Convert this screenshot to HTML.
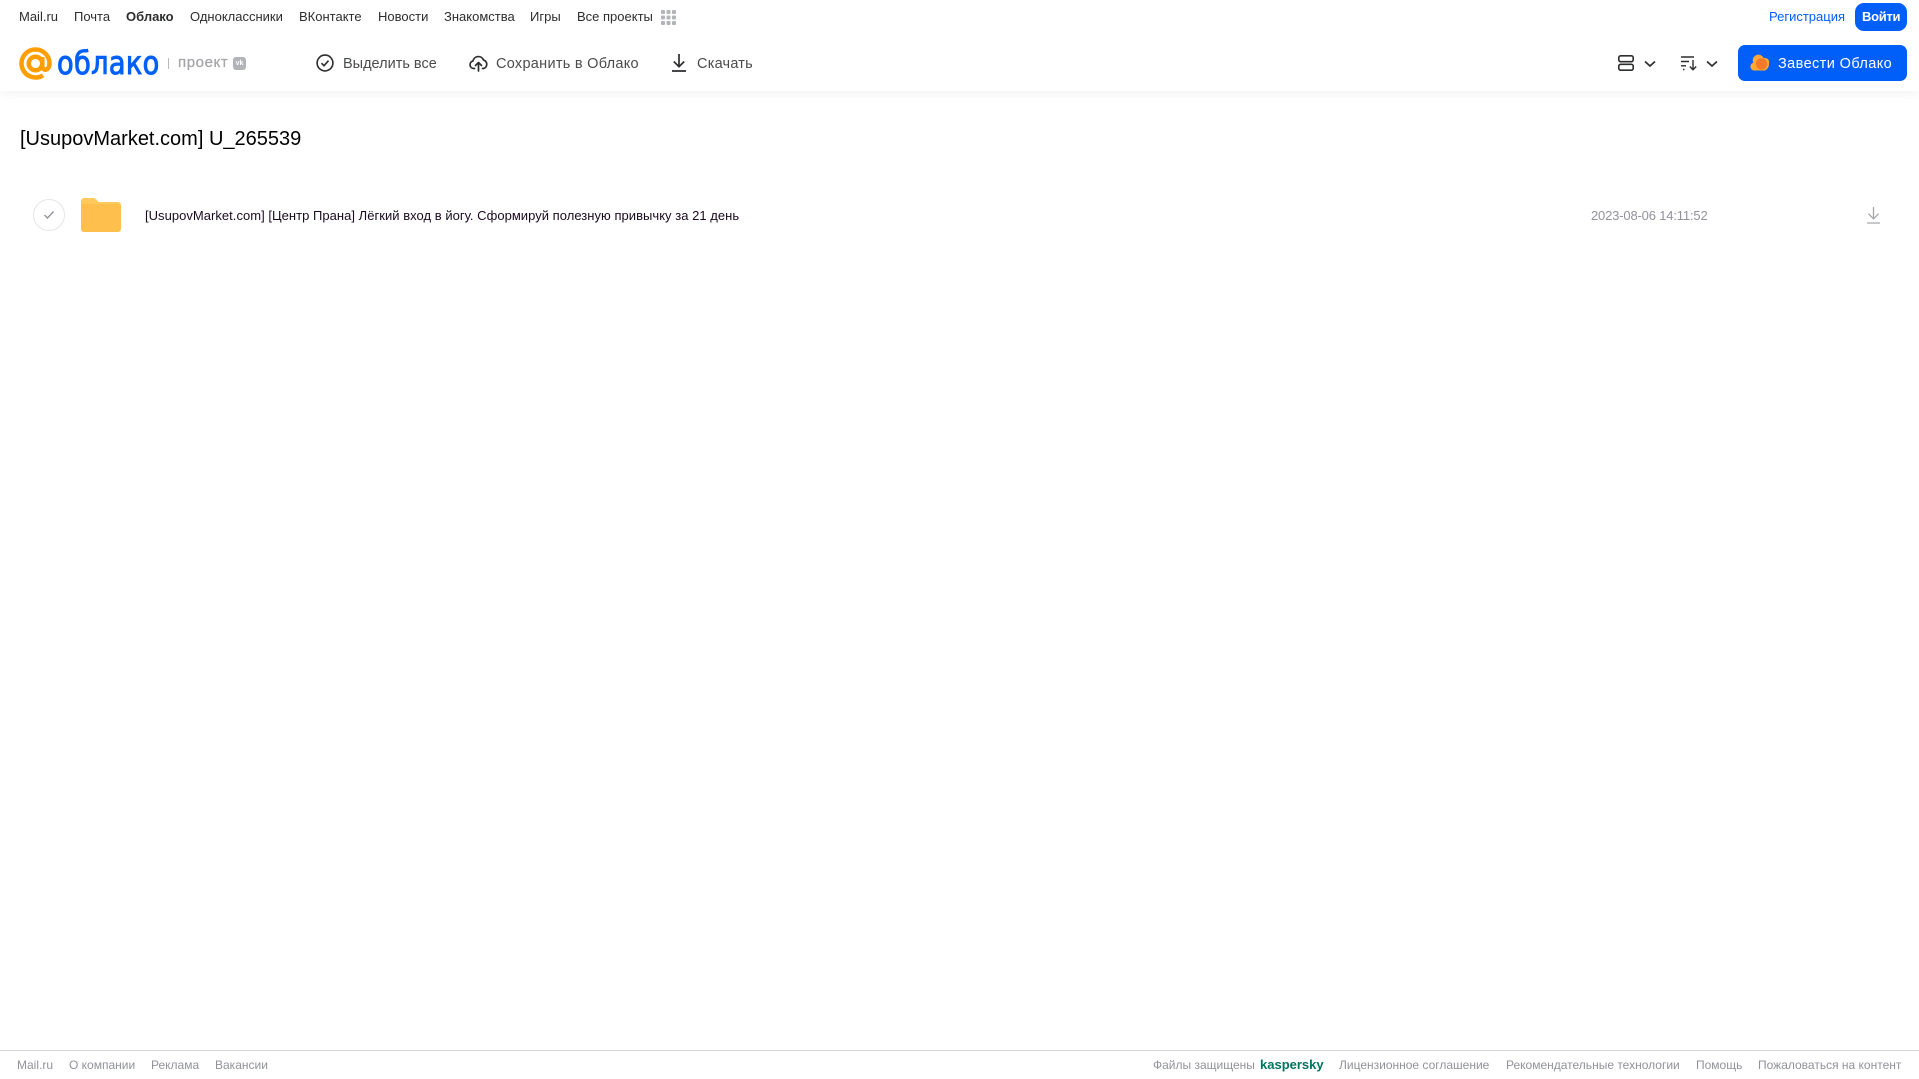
<!DOCTYPE html>
<html lang="ru"><head><meta charset="utf-8"><title>Облако</title>
<style>
html,body{margin:0;padding:0;width:1919px;height:1079px;overflow:hidden;background:#fff;font-family:"Liberation Sans",sans-serif}
.t{position:absolute;white-space:nowrap;line-height:20px}
.n{font-size:13px;color:#2c2d2e;top:7px}
.b{font-size:14.5px;color:#4a4b4d;top:54px}
.f{font-size:12px;color:#919399;top:1055px}
svg{position:absolute;overflow:visible}
</style></head><body>
<div style="position:absolute;left:0;top:0;width:1919px;height:91px;background:#fff;box-shadow:0 1px 12px rgba(0,0,0,.07)"></div>

<span class="t n" style="left:19px">Mail.ru</span>
<span class="t n" style="left:74px">Почта</span>
<span class="t n" style="left:126px;font-weight:700">Облако</span>
<span class="t n" style="left:190px">Одноклассники</span>
<span class="t n" style="left:299px">ВКонтакте</span>
<span class="t n" style="left:378px">Новости</span>
<span class="t n" style="left:444px">Знакомства</span>
<span class="t n" style="left:530px">Игры</span>
<span class="t n" style="left:577px">Все проекты</span>
<svg style="left:661px;top:10px" width="15" height="15" fill="#b3b4b7"><rect width="4" height="4" rx="1"/><rect x="5.500" width="4" height="4" rx="1"/><rect x="11" width="4" height="4" rx="1"/><rect y="5.500" width="4" height="4" rx="1"/><rect x="5.500" y="5.500" width="4" height="4" rx="1"/><rect x="11" y="5.500" width="4" height="4" rx="1"/><rect y="11" width="4" height="4" rx="1"/><rect x="5.500" y="11" width="4" height="4" rx="1"/><rect x="11" y="11" width="4" height="4" rx="1"/></svg>
<span class="t n" style="left:1769px;color:#005ff9">Регистрация</span>
<div style="position:absolute;left:1855px;top:3px;width:52px;height:28px;border-radius:9px;background:#005ff9"></div>
<span class="t n" style="left:1862px;color:#fff;font-weight:700;letter-spacing:-.3px">Войти</span>

<svg style="left:19px;top:47px" width="33" height="33" viewBox="0 0 33 33" fill="none" stroke="#ff9e00" stroke-width="4.500"><circle cx="16.500" cy="16.500" r="6.800"/><path d="M23.300 10v9c0 5.500 7.200 5 7.200-2.500A14 14 0 1 0 24 28.300"/></svg>
<span class="t" style="left:57px;top:46px;font-size:32px;line-height:34px;color:#005ff9;letter-spacing:.4px;-webkit-text-stroke:1px #005ff9;font-family:'DejaVu Sans',sans-serif;transform-origin:0 50%;transform:scaleX(.85)">облако</span>
<div style="position:absolute;left:168px;top:58px;width:1px;height:11px;background:#b9babd"></div>
<span class="t" style="left:178px;top:53px;font-size:15px;color:#a5a6a9;letter-spacing:.6px;-webkit-text-stroke:.3px #a5a6a9">проект</span>
<div style="position:absolute;left:233px;top:57px;width:13px;height:13px;border-radius:3px;background:#b3b4b7;color:#fff;font-size:7px;font-weight:700;line-height:13px;text-align:center">vk</div>

<svg style="left:316px;top:54px" width="18" height="18" viewBox="0 0 18 18" fill="none" stroke="#2c2d2e" stroke-width="1.600"><circle cx="9" cy="9" r="7.900"/><path d="M5.500 9.200l2.500 2.500 4.500-5"/></svg>
<span class="t b" style="left:343px">Выделить все</span>
<svg style="left:469px;top:54px" width="19" height="18" viewBox="0 0 19 18" fill="none" stroke="#2c2d2e" stroke-width="1.700" stroke-linecap="round" stroke-linejoin="round"><path d="M5.500 14.500H4.800A3.800 3.800 0 0 1 4 7a5.500 5.500 0 0 1 10.500-1A4.400 4.400 0 0 1 14.500 14.500H13.500"/><path d="M9.500 17V9M6.500 11.500l3-3 3 3"/></svg>
<span class="t b" style="left:496px;letter-spacing:.28px">Сохранить в Облако</span>
<svg style="left:672px;top:54px" width="14" height="18" viewBox="0 0 14 18" fill="none" stroke="#2c2d2e" stroke-width="1.700"><path d="M7 0v12.500M1.800 7.500L7 12.700l5.200-5.200M0 17h14"/></svg>
<span class="t b" style="left:697px;letter-spacing:.22px">Скачать</span>

<svg style="left:1618px;top:55px" width="16" height="16" viewBox="0 0 16 16" fill="none" stroke="#2c2d2e" stroke-width="1.600"><rect x=".8" y=".8" width="14.400" height="5.900" rx="1.800"/><rect x=".8" y="9.300" width="14.400" height="5.900" rx="1.800"/></svg>
<svg style="left:1644px;top:60px" width="12" height="8" fill="none" stroke="#2c2d2e" stroke-width="1.700"><path d="M1 1.500l5 4.500 5-4.500"/></svg>
<svg style="left:1681px;top:55px" width="16" height="16" viewBox="0 0 16 16" fill="none" stroke="#2c2d2e" stroke-width="1.400"><path d="M0 2h13M0 6.500h8M0 10.800h5M2 14.500h1.500M12 5v9.500M8.800 11.500l3.200 3.200 3.200-3.200"/></svg>
<svg style="left:1706px;top:60px" width="12" height="8" fill="none" stroke="#2c2d2e" stroke-width="1.700"><path d="M1 1.500l5 4.500 5-4.500"/></svg>
<div style="position:absolute;left:1738px;top:45px;width:169px;height:36px;border-radius:7px;background:#005ff9"></div>
<svg style="left:1750px;top:54px" width="19" height="17" viewBox="0 0 19 17"><path d="M4 16.500a4 4 0 0 1-.8-7.800A5.500 5.500 0 0 1 13.500 4a4.500 4.500 0 0 1 5.500 5.500 7 7 0 0 1-4 7z" fill="#ffa930"/><circle cx="11.500" cy="10" r="5.700" fill="#f5792b"/></svg>
<span class="t b" style="left:1778px;color:#fff;letter-spacing:.4px">Завести Облако</span>

<span class="t" style="left:20px;top:127px;font-size:20px;line-height:24px;color:#000">[UsupovMarket.com] U_265539</span>

<div style="position:absolute;left:33px;top:199px;width:30px;height:30px;border:1px solid #e5e5e7;border-radius:50%"></div>
<svg style="left:43px;top:210px" width="12" height="10" fill="none" stroke="#919399" stroke-width="1.400"><path d="M1.500 5l3 3 6-6.500"/></svg>
<svg style="left:81px;top:198px" width="40" height="34" viewBox="0 0 40 34"><path d="M0 3a3 3 0 0 1 3-3h9c2 0 3 .8 4 2.200L17.500 4H37a3 3 0 0 1 3 3v6H0z" fill="#ffc95e"/><path d="M0 6h37a3 3 0 0 1 3 3v22a3 3 0 0 1-3 3H3a3 3 0 0 1-3-3z" fill="#ffbf4d"/></svg>
<span class="t" style="left:145px;top:206px;font-size:13px;color:#1a0a1f;letter-spacing:.03px">[UsupovMarket.com] [Центр Прана] Лёгкий вход в йогу. Сформируй полезную привычку за 21 день</span>
<span class="t" style="left:1591px;top:206px;font-size:13px;color:#919399;letter-spacing:-.17px">2023-08-06 14:11:52</span>
<svg style="left:1867px;top:207px" width="13" height="17" viewBox="0 0 13 17" fill="none" stroke="#a5a6a9" stroke-width="1.300"><path d="M6.500 0v11.500M1.500 6.800l5 5 5-5M0 16h13"/></svg>

<div style="position:absolute;left:0;top:1050px;width:1919px;height:1px;background:#d9d9db"></div>
<span class="t f" style="left:17px">Mail.ru</span>
<span class="t f" style="left:69px">О компании</span>
<span class="t f" style="left:151px">Реклама</span>
<span class="t f" style="left:215px">Вакансии</span>
<span class="t f" style="left:1153px">Файлы защищены</span>
<span class="t" style="left:1260px;top:1055px;font-size:13px;font-weight:700;color:#00745f">kaspersky</span>
<span class="t f" style="left:1339px">Лицензионное соглашение</span>
<span class="t f" style="left:1506px">Рекомендательные технологии</span>
<span class="t f" style="left:1696px">Помощь</span>
<span class="t f" style="left:1758px">Пожаловаться на контент</span>
</body></html>
